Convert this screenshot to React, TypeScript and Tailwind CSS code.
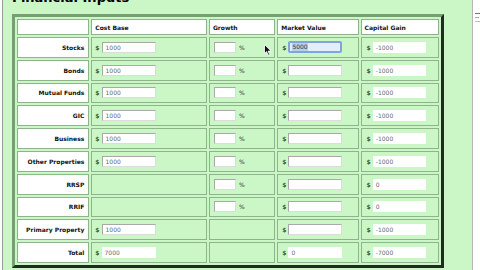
import React from 'react';

interface Row {
  label: string;
  cost?: string;
  growth: boolean;
  market?: string;
  marketReadOnly?: boolean;
  focused?: boolean;
  gain: string;
  costReadOnly?: boolean;
}

const rows: Row[] = [
  { label: 'Stocks', cost: '1000', growth: true, market: '5000', focused: true, gain: '-1000' },
  { label: 'Bonds', cost: '1000', growth: true, market: '', gain: '-1000' },
  { label: 'Mutual Funds', cost: '1000', growth: true, market: '', gain: '-1000' },
  { label: 'GIC', cost: '1000', growth: true, market: '', gain: '-1000' },
  { label: 'Business', cost: '1000', growth: true, market: '', gain: '-1000' },
  { label: 'Other Properties', cost: '1000', growth: true, market: '', gain: '-1000' },
  { label: 'RRSP', growth: true, market: '', gain: '0' },
  { label: 'RRIF', growth: true, market: '', gain: '0' },
  { label: 'Primary Property', cost: '1000', growth: false, market: '', gain: '-1000' },
  { label: 'Total', cost: '7000', costReadOnly: true, growth: false, market: '0', marketReadOnly: true, gain: '-7000' },
];

const Field: React.FC<{ value: string; readOnly?: boolean; focused?: boolean; width: string }> = ({
  value,
  readOnly,
  focused,
  width,
}) => {
  if (focused) {
    return (
      <div className={`${width} h-[12px] rounded-[2px] border-2 border-[#7ea6dc] bg-[#e4eefb] flex items-center pl-[2px]`}>
        <span className="bg-[#b7cff0] text-[#333] text-[6px] leading-[8px]">{value}</span>
      </div>
    );
  }
  return (
    <div
      className={`${width} h-[11px] flex items-center pl-[3px] text-[6px] text-[#6a6a6a] bg-white ${
        readOnly ? '' : 'border border-t-[#a9a9a9] border-l-[#a9a9a9] border-r-[#dcdcdc] border-b-[#dcdcdc]'
      }`}
    >
      {value}
    </div>
  );
};

const Dollar = () => <span className="text-[6px] font-bold text-[#3d5c3a] mr-[2px]">$</span>;

const App: React.FC = () => {
  const cell = 'border border-[#8db589] p-0 align-middle';
  return (
    <div className="w-[480px] h-[270px] overflow-hidden flex bg-white font-['DejaVu_Sans',sans-serif]">
      {/* left edge of the window */}
      <div className="w-[2px] bg-white border-r border-[#9a9a9a] box-content" />

      <div className="relative w-[469px] bg-[#cbf6c6] pl-[9px]">
        <h1 className="text-[13px] leading-[13px] font-bold text-black -mt-[9px]">Financial Inputs</h1>

        <table className="mt-[10px] w-[432px] table-fixed border-separate border-spacing-[2px] border-l-[3px] border-t-[3px] border-r-[3px] border-b-[3px] border-l-[#76a072] border-t-[#76a072] border-r-[#1d2f1c] border-b-[#1d2f1c]">
          <colgroup>
            <col className="w-[72px]" />
            <col className="w-[115px]" />
            <col className="w-[66px]" />
            <col className="w-[81px]" />
            <col className="w-[78px]" />
          </colgroup>
          <thead>
            <tr>
              <th className={`${cell} bg-white h-[16px]`} />
              {['Cost Base', 'Growth', 'Market Value', 'Capital Gain'].map((h) => (
                <th key={h} className={`${cell} bg-white h-[16px] text-left pl-[3px] text-[6px] font-bold text-[#111]`}>
                  {h}
                </th>
              ))}
            </tr>
          </thead>
          <tbody>
            {rows.map((r) => (
              <tr key={r.label}>
                <td className={`${cell} bg-white h-[20.8px] text-right pr-[4px] text-[6px] font-bold text-[#111] whitespace-nowrap`}>
                  {r.label}
                </td>
                <td className={`${cell} h-[20.8px]`}>
                  {r.cost !== undefined && (
                    <div className="flex items-center pl-[3px]">
                      <Dollar />
                      <Field value={r.cost} readOnly={r.costReadOnly} width="w-[54px]" />
                    </div>
                  )}
                </td>
                <td className={`${cell} h-[20.8px]`}>
                  {r.growth && (
                    <div className="flex items-center pl-[4px]">
                      <Field value="" width="w-[22px]" />
                      <span className="ml-[3px] text-[6px] text-[#333]">%</span>
                    </div>
                  )}
                </td>
                <td className={`${cell} h-[20.8px]`}>
                  <div className="flex items-center pl-[4px]">
                    <Dollar />
                    <Field value={r.market ?? ''} readOnly={r.marketReadOnly} focused={r.focused} width="w-[54px]" />
                  </div>
                </td>
                <td className={`${cell} h-[20.8px]`}>
                  <div className="flex items-center pl-[5px]">
                    <Dollar />
                    <Field value={r.gain} readOnly width="w-[53px]" />
                  </div>
                </td>
              </tr>
            ))}
          </tbody>
        </table>

        {/* mouse pointer */}
        <svg className="absolute left-[261px] top-[44px]" width="8" height="12" viewBox="0 0 8 12">
          <path d="M0.5 0.5 L0.5 9.5 L2.6 7.6 L4.2 11.2 L5.6 10.6 L4 7.1 L7 7.1 Z" fill="#111" stroke="#fff" strokeWidth="0.8" />
        </svg>
      </div>

      {/* right window edge */}
      <div className="flex-1 bg-white border-l border-[#b5b5b5] flex flex-col pt-[13px] pl-[2px] gap-[3px]">
        <div className="w-[5px] h-[1px] bg-[#777]" />
        <div className="w-[4px] h-[1px] bg-[#aaa]" />
        <div className="w-[5px] h-[1px] bg-[#bbb]" />
      </div>
    </div>
  );
};

export default App;
